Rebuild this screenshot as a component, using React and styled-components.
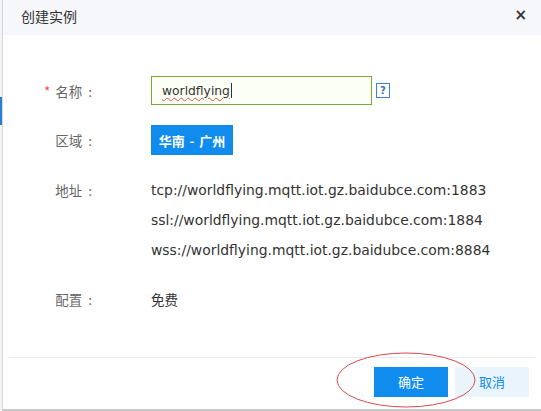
import React from 'react';
import styled, { createGlobalStyle } from 'styled-components';

const GlobalStyle = createGlobalStyle`
    html, body {
        margin: 0;
        padding: 0;
        background: #fff;
    }
    body {
        font-family: "DejaVu Sans", "Noto Sans CJK SC", sans-serif;
        color: #333;
    }
`;

const Page = styled.div`
    display: flex;
    width: 541px;
    height: 411px;
    overflow: hidden;
`;

const Backdrop = styled.div`
    width: 2px;
    flex: none;
    position: relative;
    background: #f4f4f4;
    .mark {
        position: absolute;
        left: 0;
        top: 97px;
        width: 2px;
        height: 28px;
        background: #2b7fd0;
    }
`;

const Dialog = styled.div`
    flex: 1;
    display: flex;
    flex-direction: column;
    border-left: 1px solid #d6d6d6;
    border-bottom: 2px solid #c8c8c8;
    background: #fff;
    position: relative;
`;

const Header = styled.div`
    height: 35px;
    flex: none;
    display: flex;
    align-items: center;
    justify-content: space-between;
    padding: 0 14px 4px 18px;
    background: #f5f7fa;
    font-family: "Noto Sans CJK SC", sans-serif;
    font-size: 14px;
    color: #333;
    box-sizing: border-box;
`;

const Close = styled.span`
    font-family: "DejaVu Sans", sans-serif;
    font-size: 15px;
    font-weight: bold;
    color: #333;
    line-height: 1;
`;

const Body = styled.div`
    flex: 1;
    padding: 41px 0 0 0;
    display: flex;
    flex-direction: column;
`;

const Row = styled.div`
    display: flex;
    align-items: ${props => props.top ? 'flex-start' : 'center'};
    margin-bottom: ${props => props.gap || 0}px;
`;

const Label = styled.div`
    width: 89px;
    flex: none;
    text-align: right;
    box-sizing: border-box;
    font-family: "Noto Sans CJK SC", sans-serif;
    font-size: 13.5px;
    color: #666;
    margin-right: 59px;
    line-height: 20px;
    .star {
        color: #ea4e3d;
        margin-right: 5px;
    }
    .colon {
        margin-left: 6px;
    }
`;

const Input = styled.div`
    width: 221px;
    height: 29px;
    box-sizing: border-box;
    border: 1px solid #78a939;
    background: #fcfff5;
    padding-left: 10px;
    display: flex;
    align-items: center;
    font-size: 12.3px;
    color: #333;
    span {
        text-decoration: underline wavy #e05050;
        text-decoration-thickness: 1px;
        text-underline-offset: 2px;
    }
    .caret {
        display: inline-block;
        width: 1px;
        height: 15px;
        background: #333;
        margin-left: 1px;
    }
`;

const Help = styled.span`
    width: 14px;
    height: 15px;
    margin-left: 4px;
    border: 1px solid #3f83d0;
    box-sizing: border-box;
    display: flex;
    align-items: center;
    justify-content: center;
    font-size: 10px;
    font-weight: bold;
    color: #3f6fb8;
`;

const Button = styled.button`
    height: 30px;
    width: ${props => props.w}px;
    border: none;
    padding: 0;
    font-family: "Noto Sans CJK SC", sans-serif;
    font-size: 13px;
    background: ${props => props.light ? '#e9f4fd' : '#108cee'};
    color: ${props => props.light ? '#108cee' : '#fff'};
    font-weight: ${props => props.bold ? 'bold' : 'normal'};
    word-spacing: ${props => props.bold ? '2px' : '0'};
`;

const Lines = styled.div`
    display: flex;
    flex-direction: column;
    gap: 10px;
`;

const Line = styled.div`
    font-size: 13.9px;
    line-height: 20px;
    color: #333;
    white-space: nowrap;
`;

const Value = styled.div`
    font-family: "Noto Sans CJK SC", sans-serif;
    font-size: 13.5px;
    color: #333;
    line-height: 20px;
`;

const Footer = styled.div`
    margin: 0 6px;
    border-top: 1px solid #ececec;
    height: 52px;
    display: flex;
    justify-content: flex-end;
    align-items: center;
    gap: 7px;
    padding-right: 6px;
    padding-bottom: 4px;
    box-sizing: border-box;
    position: relative;
`;

const Ring = styled.svg`
    position: absolute;
    left: 327px;
    top: -7px;
    overflow: visible;
`;

export default function App() {
    return (
        <>
            <GlobalStyle />
            <Page>
                <Backdrop><div className="mark" /></Backdrop>
                <Dialog>
                    <Header>
                        <span>创建实例</span>
                        <Close>×</Close>
                    </Header>
                    <Body>
                        <Row gap={20}>
                            <Label><span className="star">*</span>名称<span className="colon">:</span></Label>
                            <Input><span>worldflying</span><i className="caret" /></Input>
                            <Help>?</Help>
                        </Row>
                        <Row gap={25}>
                            <Label>区域<span className="colon">:</span></Label>
                            <Button w={82} bold>华南 - 广州</Button>
                        </Row>
                        <Row top gap={29}>
                            <Label>地址<span className="colon">:</span></Label>
                            <Lines>
                                <Line>tcp://worldflying.mqtt.iot.gz.baidubce.com:1883</Line>
                                <Line>ssl://worldflying.mqtt.iot.gz.baidubce.com:1884</Line>
                                <Line>wss://worldflying.mqtt.iot.gz.baidubce.com:8884</Line>
                            </Lines>
                        </Row>
                        <Row>
                            <Label>配置<span className="colon">:</span></Label>
                            <Value>免费</Value>
                        </Row>
                    </Body>
                    <Footer>
                        <Button w={74}>确定</Button>
                        <Button w={74} light>取消</Button>
                        <Ring width="140" height="58">
                            <ellipse cx="70" cy="29" rx="69" ry="27" fill="none" stroke="#d94a4a" strokeWidth="1" />
                        </Ring>
                    </Footer>
                </Dialog>
            </Page>
        </>
    );
}
